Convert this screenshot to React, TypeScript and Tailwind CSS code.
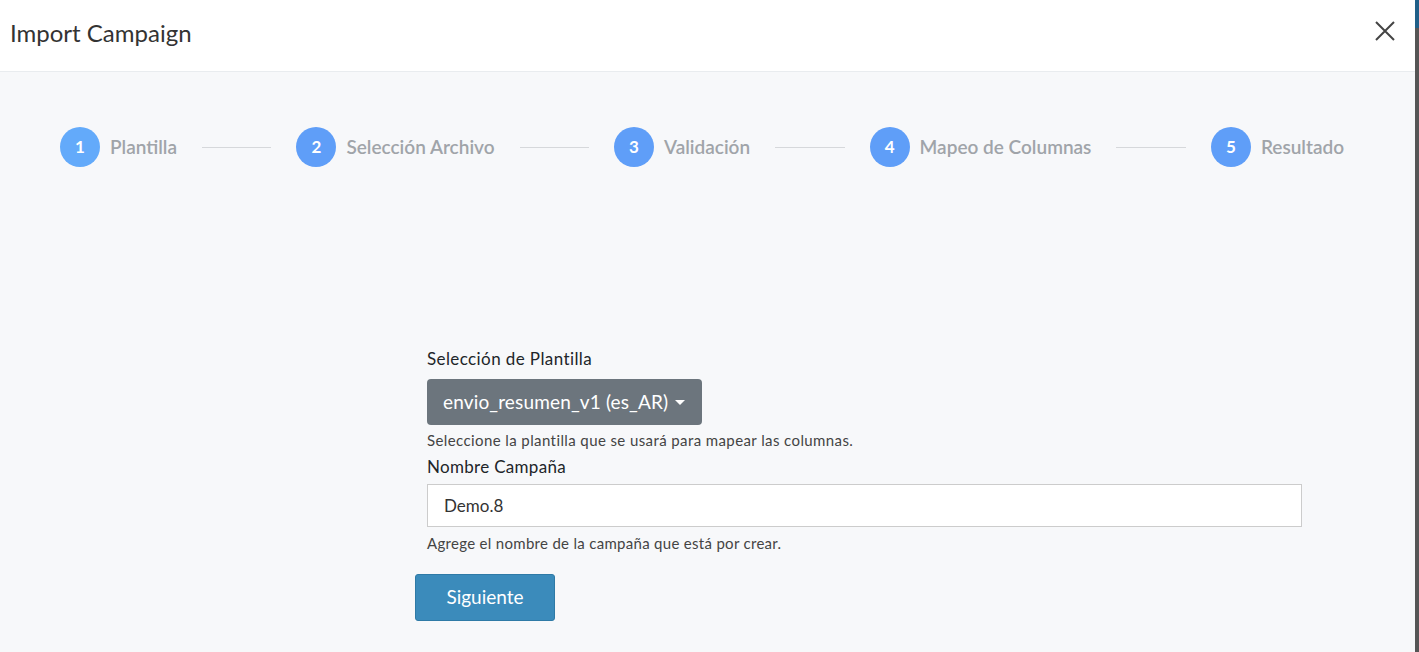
import React from "react";

const steps = [
  { n: 1, label: "Plantilla", color: "bg-[#63aafa]" },
  { n: 2, label: "Selección Archivo", color: "bg-[#5f9ef8]" },
  { n: 3, label: "Validación", color: "bg-[#5f9ef8]" },
  { n: 4, label: "Mapeo de Columnas", color: "bg-[#5f9ef8]" },
  { n: 5, label: "Resultado", color: "bg-[#5f9ef8]" },
];

export default function App() {
  return (
    <div
      className="flex h-[652px] w-[1419px] overflow-hidden"
      style={{ fontFamily: "Lato, 'Noto Sans', sans-serif" }}
    >
      <div className="flex w-[1415px] flex-col bg-[#f7f8fa]">
        <div className="flex h-[72px] items-center justify-between border-b border-[#e9ecef] bg-white pl-[10px] pr-[20px]">
          <h1 className="mt-[-6px] text-[24px] text-[#333]">Import Campaign</h1>
          <svg width="20" height="20" viewBox="0 0 20 20" className="mt-[-9px]">
            <path d="M1 1 L19 19 M19 1 L1 19" stroke="#444" strokeWidth="2" />
          </svg>
        </div>
        <div className="flex items-center pl-[60px] pr-[71px] pt-[55px]">
          {steps.map((s, i) => (
            <React.Fragment key={s.n}>
              <div className="flex items-center">
                <div
                  className={`flex h-[40px] w-[40px] items-center justify-center rounded-full ${s.color} text-[17px] font-bold text-white`}
                >
                  {s.n}
                </div>
                <span className="ml-[10px] text-[19px] font-semibold text-[#a0a4a9]">{s.label}</span>
              </div>
              {i < steps.length - 1 && <div className="mx-[25px] h-px flex-1 bg-[#d6d8db]" />}
            </React.Fragment>
          ))}
        </div>
        <div className="ml-[415px] mt-[177px] flex w-[887px] flex-col">
          <div className="pl-[12px]">
            <label className="mt-[3px] block text-[17px] leading-[24px] tracking-[0.4px] text-[#212529]">
              Selección de Plantilla
            </label>
            <button className="mt-[8px] flex h-[46px] items-center rounded-[4px] bg-[#6c757d] pl-[16px] pr-[17px] text-[19px] tracking-[0.15px] text-white">
              envio_resumen_v1 (es_AR)
              <span className="ml-[7px] inline-block h-0 w-0 border-x-[5px] border-t-[5px] border-x-transparent border-t-white" />
            </button>
            <p className="mt-[5px] text-[15px] leading-[20px] tracking-[0.4px] text-[#444]">
              Seleccione la plantilla que se usará para mapear las columnas.
            </p>
            <label className="mt-[5px] block text-[17px] leading-[24px] tracking-[0.3px] text-[#212529]">
              Nombre Campaña
            </label>
            <div className="mt-[5px] flex h-[43px] items-center border border-[#ccc] bg-white px-[16px] text-[17px] text-[#333]">
              Demo.8
            </div>
            <p className="mt-[6px] text-[15px] leading-[20px] tracking-[0.3px] text-[#444]">
              Agrege el nombre de la campaña que está por crear.
            </p>
          </div>
          <button className="mt-[21px] h-[47px] w-[140px] rounded-[3px] border border-[#2f7aa6] bg-[#3b8bbb] text-[19px] text-white">
            Siguiente
          </button>
        </div>
      </div>
      <div className="flex flex-1 flex-col">
        <div className="h-[28px] bg-[#1f5f88]" />
        <div className="flex-1 bg-[#555]" />
      </div>
    </div>
  );
}
